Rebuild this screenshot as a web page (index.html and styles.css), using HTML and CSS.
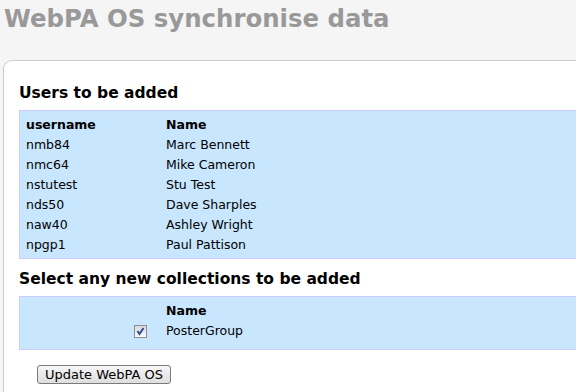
FILE: index.html
```html
<!DOCTYPE html>
<html lang="en">
<head>
    <meta charset="UTF-8">
    <title>WebPA OS synchronise data</title>
    <link rel="stylesheet" href="styles.css">
</head>
<body>
<h1 class="page-title">WebPA OS synchronise data</h1>

<div class="content">
    <h2>Users to be added</h2>
    <table class="grid">
        <tr>
            <th class="col-user">username</th>
            <th>Name</th>
        </tr>
        <tr><td>nmb84</td><td>Marc Bennett</td></tr>
        <tr><td>nmc64</td><td>Mike Cameron</td></tr>
        <tr><td>nstutest</td><td>Stu Test</td></tr>
        <tr><td>nds50</td><td>Dave Sharples</td></tr>
        <tr><td>naw40</td><td>Ashley Wright</td></tr>
        <tr><td>npgp1</td><td>Paul Pattison</td></tr>
    </table>

    <h2>Select any new collections to be added</h2>
    <table class="grid grid-collections">
        <tr>
            <th class="col-user"></th>
            <th>Name</th>
        </tr>
        <tr>
            <td class="col-check"><input type="checkbox" checked></td>
            <td>PosterGroup</td>
        </tr>
    </table>

    <div class="actions">
        <button type="submit">Update WebPA OS</button>
    </div>
</div>
</body>
</html>
```

FILE: styles.css
```css
html,
body {
    height: 100%;
}

body {
    background-color: #f5f5f5;
    color: #000000;
    font-family: "DejaVu Sans", Verdana, sans-serif;
    font-size: 12.5px;
    margin: 0;
    padding: 0;
    overflow: hidden;
    display: flex;
    flex-direction: column;
}

.page-title {
    color: #999999;
    font-size: 24.4px;
    font-weight: bold;
    line-height: 28px;
    margin: 0;
    padding: 5px 0 0 4px;
    height: 55px;
    flex-shrink: 0;
}

.content {
    flex: 1;
    background-color: #ffffff;
    border: 1px solid #cccccc;
    border-right: none;
    border-bottom: none;
    border-radius: 9px 0 0 0;
    margin-left: 3px;
    padding: 21px 0 0 15px;
}

h2 {
    font-size: 15.5px;
    font-weight: bold;
    margin: 0 0 6px 0;
    line-height: 22px;
}

.grid {
    width: 100%;
    border-collapse: collapse;
    background-color: #c8e6fe;
    border-top: 1px solid #ccccff;
    border-bottom: 1px solid #ccccff;
    border-left: 1px solid #ccccff;
    margin-bottom: 9px;
}

.grid th,
.grid td {
    text-align: left;
    padding: 0 6px;
    height: 20px;
    vertical-align: middle;
}

.grid tr:first-child th {
    padding-top: 3px;
}

.grid tr:last-child td {
    padding-bottom: 4px;
}

.grid-collections {
    margin-bottom: 8px;
}

.grid-collections tr:last-child td {
    padding-bottom: 9px;
}

.col-user {
    width: 128px;
}

.grid .col-check {
    text-align: right;
    padding-right: 13px;
}

.col-check input {
    appearance: none;
    -webkit-appearance: none;
    margin: 0;
    width: 13px;
    height: 13px;
    vertical-align: middle;
    border: 1px solid #8e8f8f;
    background-color: #f0f0f0;
    background-image: url("data:image/svg+xml,%3Csvg xmlns='http://www.w3.org/2000/svg' viewBox='0 0 11 11'%3E%3Cpath d='M2.5 5 L4.5 8 L8.5 2' fill='none' stroke='%23324a9c' stroke-width='2'/%3E%3C/svg%3E"), linear-gradient(#d8d8d8, #fafafa);
    background-size: 11px 11px, 100% 100%;
    background-repeat: no-repeat;
}

.actions {
    padding: 7px 0 0 18px;
}

button {
    font-family: "DejaVu Sans", Verdana, sans-serif;
    font-size: 13px;
    line-height: 15px;
    padding: 1px 7px 1px 7px;
    border: 1px solid #7a7a7a;
    border-radius: 3px;
    background: linear-gradient(#f6f6f6, #dedede);
    color: #000000;
}
```
